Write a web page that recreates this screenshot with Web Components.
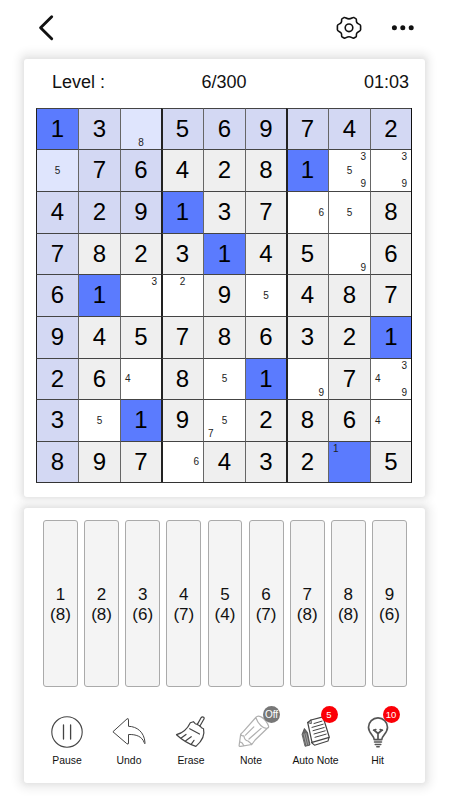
<!DOCTYPE html>
<html lang="en"><head><meta charset="utf-8"><title>Sudoku</title>
<style>html,body{margin:0;background:#fff;font-family:"Liberation Sans",Arial,sans-serif;color:#111}</style></head>
<body><sudoku-app></sudoku-app>
<script>
class Base extends HTMLElement{
  connectedCallback(){ if(!this.shadowRoot) this.attachShadow({mode:'open'}).innerHTML=this.render(); }
}
customElements.define('top-bar',class extends Base{render(){return `<style>
:host{display:flex;height:59px;box-sizing:border-box;padding:13px 32px 0 36px;align-items:flex-start}
svg{display:block;width:30px;height:30px;fill:none;stroke:#111}.gap{flex:1}.dots{margin-left:24px}
.back{margin-left:-1px}</style>
<svg class="back" viewBox="0 0 30 30" stroke-width="2.9" stroke-linecap="round" stroke-linejoin="round"><path d="M16.7 3.7 5.6 14.7 16.7 25.7"/></svg>
<span class="gap"></span>
<svg viewBox="0 0 30 30" stroke-width="1.6" stroke-linejoin="round"><circle cx="15" cy="14.8" r="3.8"/><path d="M10 4.6C11.6 3.9 12.2 5.9 15 5.9S18.400 3.900 20 4.600L21.800 5.600C23.200 6.500 21.700 7.700 22.800 9.500S26.600 11.100 26.600 12.800V16.800C26.600 18.500 23.900 18.300 22.800 20.100S23.200 23.100 21.800 24L20 25C18.400 25.700 17.800 23.700 15 23.700S11.600 25.700 10 25L8.200 24C6.800 23.100 8.300 21.900 7.200 20.100S3.400 18.500 3.400 16.800V12.800C3.400 11.100 6.100 11.300 7.200 9.500S6.800 6.500 8.200 5.600Z"/></svg>
<svg class="dots" viewBox="0 0 30 30" style="fill:#111;stroke:none"><circle cx="6.400" cy="14.800" r="2.500"/><circle cx="14.800" cy="14.800" r="2.500"/><circle cx="23.200" cy="14.800" r="2.500"/></svg>`}});
customElements.define('paper-card',class extends Base{render(){return `<style>
:host{display:block;box-sizing:border-box;width:401px;margin-left:24px;background:#fff;border-radius:3px}</style><slot></slot>`}});
customElements.define('game-status',class extends Base{render(){return `<style>
:host{display:grid;grid-template-columns:1fr 1fr 1fr;height:49px;box-sizing:border-box;padding:12px 16px 0 28px;font-size:18px;line-height:22px}
.progress{text-align:center;margin-left:-13px}.time{text-align:right}</style><span>Level :</span><span class="progress">6/300</span><span class="time">01:03</span>`}});
customElements.define('sudoku-cell',class extends Base{render(){
  const v=this.getAttribute('value'), n=this.getAttribute('notes');
  return `<style>:host{display:grid;box-sizing:border-box;border-left:1px solid #666;border-top:1px solid #444;background:#fff;font-size:24px;color:#000;overflow:hidden}
:host([tone=fixed]){background:#efefef}:host([tone=axis]){background:#d3d8f3}:host([tone=open]){background:#dfe5fd}:host([tone=same]){background:#5b7bfe}
:host([box-left]){border-left:2px solid #222}:host([edge]){border-left:1px solid #222}
.v{place-self:center;line-height:26px;padding-bottom:1px}
:host([box-left]) .v,:host([box-left]) .notes{margin-left:-1px}
.notes{display:grid;grid-template:repeat(3,1fr)/repeat(3,1fr);font-size:10px;line-height:13px;color:#222}
.notes span{text-align:center}</style>`+
  (v?`<span class="v">${v}</span>`:`<div class="notes">${[...n].map(d=>`<span style="grid-area:${Math.ceil(d/3)}/${(d-1)%3+1}">${d}</span>`).join('')}</div>`)}});
customElements.define('sudoku-board',class extends Base{render(){
  const rows=['1 3 n8 5 6 9 7 4 2','n5 7 6 4 2 8 1 n359 n39','4 2 9 1 3 7 n6 n5 8','7 8 2 3 1 4 5 n9 6','6 1 n3 n2 9 n5 4 8 7','9 4 5 7 8 6 3 2 1','2 6 n4 8 n5 1 n9 7 n349','3 n5 1 9 n57 2 8 6 n4','8 9 7 n6 4 3 2 n1 5'];
  let h='';
  rows.forEach((r,y)=>r.split(' ').forEach((c,x)=>{
    const note=c[0]==='n', axis=y===0||x===0||(y<3&&x<3);
    const tone=(c==='1'||c==='n1')?'same':axis?(note?'open':'axis'):(note?'':'fixed');
    h+=`<sudoku-cell ${note?'notes':'value'}="${c.replace('n','')}" tone="${tone}" ${x===3||x===6?'box-left':x===0?'edge':''}></sudoku-cell>`}));
  return `<style>:host{display:grid;box-sizing:border-box;width:376px;margin-left:12px;border-right:1px solid #111;border-bottom:1px solid #333;
grid-template-columns:42px 42px 41px 42px 42px 41px 42px 42px 41px;grid-template-rows:41px 42px 42px 41px 42px 42px 41px 42px 41px}</style>${h}`}});
customElements.define('number-key',class extends Base{render(){return `<style>
:host{display:flex;flex:1;flex-direction:column;justify-content:center;align-items:center;box-sizing:border-box;border:1px solid #aaa;border-radius:3px;background:#f4f4f4;font-size:17px;line-height:20px;padding-top:2px}</style>
<span>${this.getAttribute('digit')}</span><span>(${this.getAttribute('left')})</span>`}});
customElements.define('number-pad',class extends Base{render(){return `<style>
:host{display:flex;gap:6.2px;height:167px;padding:12px 18px 0 19px}</style>${[8,8,6,7,4,7,8,8,6].map((n,i)=>`<number-key digit="${i+1}" left="${n}"></number-key>`).join('')}`}});
const ICONS={
pause:'<circle cx="20" cy="20" r="15.200" stroke-width="1.100"/><path stroke-width="1.300" d="M16.500 13V27M23.600 13V27"/>',
undo:'<path stroke-width="1" d="M4.200 19.500 18 6.900Q19.500 6 19.500 7.800V14.300C28 14.500 35.200 20 36 30.500 36.200 32.200 35.600 32.200 35.200 30.600 33 24.300 27 22.300 19.500 22.500V31Q19.500 33 18 31.800Z"/>',
erase:'<path stroke-width="1.200" d="M26.200 12.600 30.200 5.500Q31.300 4.200 32.700 5.200 33.700 6 32.800 7.300L28.800 14.300M19.300 10.700 22.400 9.700 24.200 11.700Q29.200 13.200 30.500 15.800L32.500 16.700Q34.800 26 24.900 34.400 14 30.600 5.500 22.700 15 20 19.300 10.700ZM18.700 16.700 28.500 22M10.200 26 15 22.400M14.400 29 20.200 24.700M20.500 31.800 23 28.300"/>',
note:'<g transform="translate(2.500 0)" stroke="#b0b0b0" stroke-width="1.200"><path d="M22.300 5.500 10 19.300 7.200 22.100 5.600 33.700Q5.700 34.800 7.200 34.300L18.300 32.500 21.600 28 34.600 15.500M22.300 5.500C24.600 2.500 29.500 5 32.400 9.200S36.300 16 33.400 16.300C29.600 16.800 24.500 12 22.300 5.500M7.200 22.100Q8 24.500 10.400 23.800 10.900 28.600 14.500 29 17 31 18.300 32.500M6.500 29.800Q9 30.300 10.200 33.500M12 23.200 20.300 14.900M15.500 27 27.600 16.400"/></g>',
auto:'<g transform="translate(1.500 0)"><path stroke-width="1.100" fill="#fff" d="M27 24 31.500 25.500 30.500 29 17 33.200 13.900 30.500"/><path stroke-width="1.200" fill="#fff" d="M10.200 10.500 13.500 8 25.500 4.800 31.800 25.300 14.500 30.400Z"/><path stroke-width="1" d="M10.200 10.500 13.800 11.500 13.500 8M16.500 11.500 24.500 9.100M14.500 15.400 25.700 12.200M15.500 18.700 26.700 15.500M16.500 22 27.700 18.800M17.500 25.300 28.700 22.100"/><path fill="#666" stroke-width=".8" d="M4.700 22 6.900 16.500 10 20.500 12.500 33 7.900 34.200Z"/><path stroke="#bbb" stroke-width=".7" d="M6.500 22 9.200 33M8.400 21.500 11 32.300"/></g>',
hint:'<path stroke-width="1.700" stroke="#555" d="M16.200 27.600C16.200 23.500 10.500 21.500 10.500 15.300A9.500 9.500 0 0 1 29.500 15.300C29.500 21.500 23.800 23.500 23.800 27.600ZM20 27.500V21.500M15.900 18 20 21.500 24.100 18M15.600 18.200 17.800 17.500M24.400 18.200 22.200 17.500"/><path stroke-width="1.500" stroke="#555" d="M16.500 30.100H23.500M17.200 32.500H22.800M18.800 34.700H21.200"/>'};
customElements.define('tool-button',class extends Base{render(){const b=this.getAttribute('badge');return `<style>
:host{display:flex;flex-direction:column;align-items:center;position:relative;width:62px;font-size:10.400px;line-height:13px;color:#111}
svg{display:block;width:40px;height:40px;fill:none;stroke:#444;stroke-linecap:round;stroke-linejoin:round}.label{margin-top:2px;white-space:nowrap}
.badge{position:absolute;left:${this.getAttribute('badge-x')||0}px;top:-6px;width:17px;height:17px;border-radius:50%;background:${b==='Off'?'#777':'#fb0007'};color:#fff;text-align:center;font-size:${b==='Off'?10:9.5}px;line-height:17px}
</style><svg viewBox="0 0 40 40">${ICONS[this.getAttribute('icon')]}</svg><span class="label"><slot></slot></span>${b?`<span class="badge">${b}</span>`:''}`}});
customElements.define('tool-bar',class extends Base{render(){return `<style>
:host{display:grid;grid-template-columns:62px 62px 60px 64.500px 62px 62px;padding:25px 0 0 12px}</style>
<tool-button icon="pause">Pause</tool-button><tool-button icon="undo">Undo</tool-button><tool-button icon="erase">Erase</tool-button><tool-button icon="note" badge="Off" badge-x="43">Note</tool-button><tool-button icon="auto" badge="5" badge-x="36">Auto Note</tool-button><tool-button icon="hint" badge="10" badge-x="36">Hit</tool-button>`}});
customElements.define('sudoku-app',class extends Base{render(){return `<style>
:host{display:block;width:450px;height:800px;overflow:hidden;background:#fff}
paper-card{box-shadow:0 0 4px 1px #e2e2e2,0 0 10px 6px #ededed}
.board{height:438px;position:relative;z-index:1;box-shadow:0 0 4px 1px #e2e2e2,0 -2px 8px 5px #eee}.controls{height:275px;margin-top:11px;position:relative;z-index:1}</style>
<top-bar></top-bar><paper-card class="board"><game-status></game-status><sudoku-board></sudoku-board></paper-card>
<paper-card class="controls" style="clip-path:inset(-10px -20px -20px -20px)"><number-pad></number-pad><tool-bar></tool-bar></paper-card>`}});
</script></body></html>
